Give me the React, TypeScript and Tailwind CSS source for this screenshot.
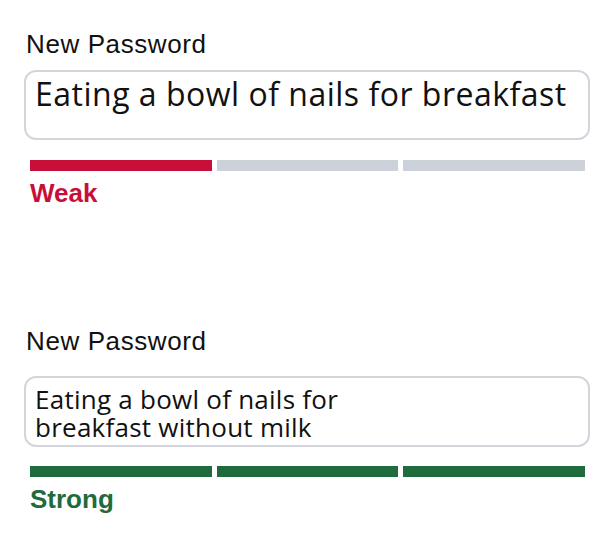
import { Fragment } from "react";

type Strength = "weak" | "strong";

const LEVELS: Record<Strength, { label: string; filled: number; bar: string; text: string }> = {
  weak: { label: "Weak", filled: 1, bar: "bg-[#c80f3a]", text: "text-[#c80f3a]" },
  strong: { label: "Strong", filled: 3, bar: "bg-[#1f6b3d]", text: "text-[#1f6b3d]" },
};

function Meter({ strength }: { strength: Strength }) {
  const lvl = LEVELS[strength];
  return (
    <div className="ml-[6px] mr-[5px] grid grid-cols-3 gap-[5px]">
      {[0, 1, 2].map((i) => (
        <div key={i} className={`h-[11px] ${i < lvl.filled ? lvl.bar : "bg-[#cdd1da]"}`} />
      ))}
    </div>
  );
}

export default function App() {
  return (
    <div className="w-[610px] h-[541px] bg-white pl-[24px] pr-[20px] pt-[30px] font-['Liberation_Sans',Arial,sans-serif]">
      {/* Weak example */}
      <label className="block ml-[2px] text-[26px] leading-[28px] tracking-[0.6px] text-[#111]">New Password</label>
      <div className="mt-[12px] h-[70px] rounded-[12px] border-2 border-[#d4d4dd] pt-[4px] px-[9px] font-['Open_Sans',sans-serif] text-[32px] leading-[36px] tracking-[0.5px] text-[#111] whitespace-nowrap">
        Eating a bowl of nails for breakfast
      </div>
      <div className="mt-[20px]">
        <Meter strength="weak" />
      </div>
      <p className={`mt-[7px] ml-[6px] text-[26px] leading-[30px] font-bold ${LEVELS.weak.text}`}>{LEVELS.weak.label}</p>

      {/* Strong example */}
      <label className="block mt-[119px] ml-[2px] text-[26px] leading-[28px] tracking-[0.6px] text-[#111]">New Password</label>
      <div className="mt-[21px] h-[71px] rounded-[12px] border-2 border-[#d4d4dd] pt-[7px] px-[9px] font-['Open_Sans',sans-serif] text-[26px] leading-[28px] tracking-[0.25px] text-[#111]">
        {["Eating a bowl of nails for", "breakfast without milk"].map((line, i) => (
          <Fragment key={i}>
            {i > 0 && <br />}
            {line}
          </Fragment>
        ))}
      </div>
      <div className="mt-[19px]">
        <Meter strength="strong" />
      </div>
      <p className={`mt-[7px] ml-[6px] text-[26px] leading-[30px] font-bold ${LEVELS.strong.text}`}>{LEVELS.strong.label}</p>
    </div>
  );
}
